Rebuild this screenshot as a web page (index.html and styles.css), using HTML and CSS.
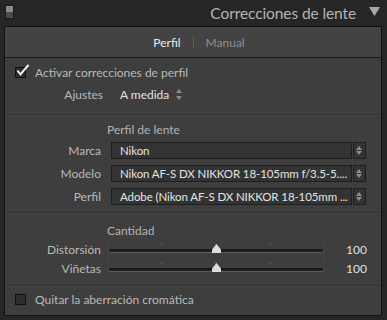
FILE: index.html
```html
<!DOCTYPE html>
<html lang="es">
<head>
	<meta charset="UTF-8">
	<title>Correcciones de lente</title>
	<link rel="stylesheet" href="styles.css">
</head>
<body>

<div class="header">
	<span class="switch"><span class="switch-top"></span><span class="switch-bottom"></span></span>
	<h1 class="title">Correcciones de lente</h1>
	<svg class="collapse" width="11" height="9" viewBox="0 0 11 9"><path d="M0 0 L11 0 L5.5 9 Z" fill="#a8a8a8"/></svg>
</div>

<div class="panel">

	<div class="tabs">
		<span class="tab active">Perfil</span>
		<span class="tab-sep"></span>
		<span class="tab">Manual</span>
	</div>

	<div class="section first">
		<label class="check-row">
			<span class="box checked">
				<svg width="14" height="13" viewBox="0 0 14 13"><path d="M1.5 6.5 L4.5 10.5 L12.5 0.8" fill="none" stroke="#f2f2f2" stroke-width="2"/></svg>
			</span>
			Activar correcciones de perfil
		</label>
		<div class="field-row setup">
			<span class="label">Ajustes</span>
			<span class="popup">A medida</span>
			<span class="updown"></span>
		</div>
	</div>

	<div class="section lens">
		<div class="sub-title">Perfil de lente</div>
		<div class="field-row">
			<span class="label">Marca</span>
			<div class="select"><span class="select-text">Nikon</span><span class="spin"></span></div>
		</div>
		<div class="field-row">
			<span class="label">Modelo</span>
			<div class="select"><span class="select-text">Nikon AF-S DX NIKKOR 18-105mm f/3.5-5....</span><span class="spin"></span></div>
		</div>
		<div class="field-row">
			<span class="label">Perfil</span>
			<div class="select"><span class="select-text">Adobe (Nikon AF-S DX NIKKOR 18-105mm ...</span><span class="spin"></span></div>
		</div>
	</div>

	<div class="section amount">
		<div class="sub-title">Cantidad</div>
		<div class="field-row slider-row">
			<span class="label">Distorsión</span>
			<div class="slider"><div class="track"></div><span class="thumb" style="left: 50%"></span></div>
			<span class="value">100</span>
		</div>
		<div class="field-row slider-row">
			<span class="label">Viñetas</span>
			<div class="slider"><div class="track"></div><span class="thumb" style="left: 50%"></span></div>
			<span class="value">100</span>
		</div>
	</div>

	<div class="section last">
		<label class="check-row">
			<span class="box"></span>
			Quitar la aberración cromática
		</label>
	</div>

</div>

</body>
</html>
```

FILE: styles.css
```css
* {
	box-sizing: border-box;
}
html, body {
	margin: 0;
	background-color: #262626;
	color: #b9b9b9;
	font-family: 'Lato', 'Open Sans', sans-serif;
	font-size: 12px;
}
body {
	width: 387px;
	height: 320px;
	overflow: hidden;
}
.header {
	height: 26px;
	display: flex;
	align-items: center;
	padding: 0 7px 0 5px;
}
.switch {
	display: flex;
	flex-direction: column;
	width: 9px;
	height: 14px;
	margin-top: -2px;
	border: 1px solid #1a1a1a;
}
.switch-top {
	flex: 1;
	background-color: #8a8a8a;
}
.switch-bottom {
	flex: 1;
	background-color: #4a4a4a;
}
.title {
	flex: 1;
	margin: 0 13px 0 0;
	text-align: right;
	font-size: 15.5px;
	letter-spacing: -0.1px;
	font-weight: normal;
	color: #b4b4b4;
}
.collapse {
	margin-top: -3px;
}
.panel {
	margin: 0 5px 0 4px;
	height: 290px;
	border: 1px solid #121212;
	background-color: #3e3e3e;
}
.tabs {
	height: 31px;
	display: flex;
	align-items: center;
	justify-content: center;
	gap: 12px;
	padding-left: 12px;
	background-color: #434343;
	border-bottom: 1px solid #1c1c1c;
	color: #8f8f8f;
}
.tab.active {
	color: #ececec;
}
.tab-sep {
	width: 1px;
	height: 12px;
	background-color: #5a5a5a;
}
.section {
	border-bottom: 1px solid #333;
	box-shadow: 0 1px 0 #464646;
}
.section.first {
	padding-top: 4px;
	height: 57px;
}
.section.last {
	border-bottom: none;
	box-shadow: none;
	padding-top: 3px;
}
.check-row {
	display: flex;
	align-items: center;
	gap: 9px;
	height: 21px;
	padding-left: 10px;
}
.box {
	position: relative;
	width: 11px;
	height: 11px;
	border: 1px solid #111;
	background-color: #2e2e2e;
}
.box svg {
	position: absolute;
	left: 0;
	top: -4px;
}
.field-row {
	display: flex;
	align-items: center;
	height: 23px;
}
.label {
	width: 96px;
	text-align: right;
	flex: none;
}
.setup .label {
	width: 98px;
}
.popup {
	margin-left: 17px;
	color: #e2e2e2;
}
.updown {
	position: relative;
	width: 7px;
	height: 11px;
	margin-left: 7px;
}
.updown::before,
.updown::after {
	content: '';
	position: absolute;
	left: 0;
	border-left: 3.5px solid transparent;
	border-right: 3.5px solid transparent;
}
.updown::before {
	top: 0;
	border-bottom: 4px solid #8c8c8c;
}
.updown::after {
	bottom: 0;
	border-top: 4px solid #8c8c8c;
}
.lens {
	height: 98px;
	padding-top: 6px;
}
.sub-title {
	height: 17px;
	line-height: 17px;
	padding-left: 102px;
	color: #b4b4b4;
}
.lens .sub-title {
	margin-bottom: 1px;
}
.select {
	display: flex;
	margin-left: 10px;
	width: 255px;
	height: 17px;
	gap: 1px;
}
.select-text {
	flex: 1;
	padding-left: 8px;
	line-height: 15px;
	background-color: #333;
	border: 1px solid #1e1e1e;
	color: #e4e4e4;
	font-size: 11.5px;
	letter-spacing: -0.1px;
	white-space: nowrap;
	overflow: hidden;
}
.spin {
	position: relative;
	width: 13px;
	background-color: #333;
	border: 1px solid #1e1e1e;
}
.spin::before,
.spin::after {
	content: '';
	position: absolute;
	left: 2px;
	border-left: 3.5px solid transparent;
	border-right: 3.5px solid transparent;
}
.spin::before {
	top: 3px;
	border-bottom: 4px solid #8c8c8c;
}
.spin::after {
	bottom: 3px;
	border-top: 4px solid #8c8c8c;
}
.amount {
	height: 73px;
	padding-top: 9px;
}
.amount .sub-title {
	margin-bottom: 1px;
}
.slider-row {
	height: 19px;
}
.slider {
	position: relative;
	margin-left: 7px;
	width: 216px;
	height: 19px;
	background-image: radial-gradient(circle, #4f4f4f 0.8px, transparent 1px);
	background-size: 54px 4px;
	background-position: -27px 2px;
	background-repeat: repeat-x;
}
.track {
	position: absolute;
	left: 0;
	right: 0;
	top: 9px;
	height: 4px;
	border-radius: 2px;
	background-color: #1e1e1e;
	border: 1px solid #5c5c5c;
	border-top-color: #151515;
}
.thumb {
	position: absolute;
	top: 4px;
	width: 9px;
	height: 9px;
	margin-left: -4px;
	background-color: #dcdcdc;
	clip-path: polygon(50% 0, 100% 60%, 100% 100%, 0 100%, 0 60%);
}
.value {
	width: 43px;
	text-align: right;
	color: #e0e0e0;
}
```
